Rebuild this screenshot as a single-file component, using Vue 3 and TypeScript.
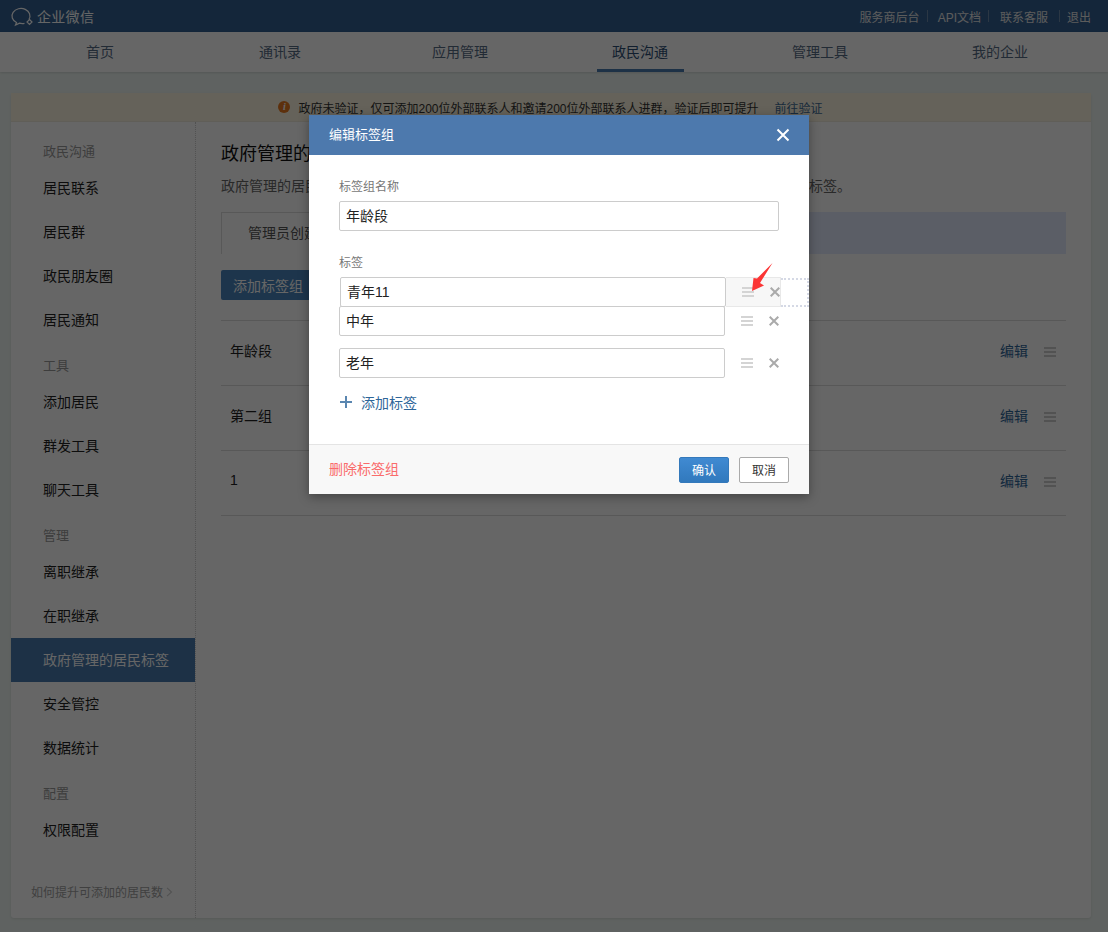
<script setup lang="ts">
interface SideGroup {
  title?: string
  items: string[]
}

const tabs = ['首页', '通讯录', '应用管理', '政民沟通', '管理工具', '我的企业']

const sideGroups: SideGroup[] = [
  { title: '政民沟通', items: ['居民联系', '居民群', '政民朋友圈', '居民通知'] },
  { title: '工具', items: ['添加居民', '群发工具', '聊天工具'] },
  { title: '管理', items: ['离职继承', '在职继承', '政府管理的居民标签', '安全管控', '数据统计'] },
  { title: '配置', items: ['权限配置'] }
]

const groups = ['年龄段', '第二组', '1']
const tags = ['中年', '老年']
</script>

<template>
  <div class="page">
    <header class="topbar">
      <div class="logo">
        <svg width="26" height="20" viewBox="0 0 26 20" fill="none">
          <path d="M18.900 12.500A9 7.500 0 1 0 6.500 15.500L5.500 18L9.500 16.200C11 16.600 13 16.700 14.500 16.300" stroke="#fff" stroke-width="1.200" />
          <path d="M19.500 12.500L22 15L19.500 17.500L17 15Z" stroke="#fff" stroke-width="1.200" />
        </svg>
        <span>企业微信</span>
      </div>
      <nav class="toplinks">
        <a>服务商后台</a><i class="first"></i><a>API文档</a><i></i><a>联系客服</a><i class="last"></i><a>退出</a>
      </nav>
    </header>

    <nav class="tabs">
      <a v-for="tab in tabs" :key="tab" class="tab" :class="{ active: tab === '政民沟通' }">
        <span>{{ tab }}</span>
      </a>
    </nav>

    <section class="card">
      <div class="notice">
        <span class="notice-icon">i</span>
        <span>政府未验证，仅可添加200位外部联系人和邀请200位外部联系人进群，验证后即可提升</span>
        <a class="notice-link">前往验证</a>
      </div>

      <div class="card-body">
        <aside class="sidebar">
          <div v-for="group in sideGroups" :key="group.title" class="side-group">
            <div class="side-title">{{ group.title }}</div>
            <a
              v-for="item in group.items"
              :key="item"
              class="side-item"
              :class="{ current: item === '政府管理的居民标签' }"
            >{{ item }}</a>
          </div>
          <a class="side-help">如何提升可添加的居民数<svg width="7" height="10" viewBox="0 0 7 10" fill="none"><path d="M1 .8L5.500 5 1 9.200" stroke="#ccc" stroke-width="1.100" /></svg></a>
        </aside>

        <main class="content">
          <h1>政府管理的居民标签</h1>
          <p>政府管理的居民标签可以由管理员统一创建和管理，成员可以在与居民沟通时为居民添加上这些标签。</p>
          <div class="sub-tabs">
            <div class="sub-tab">管理员创建的标签</div>
          </div>
          <button class="add-btn">添加标签组</button>
          <ul class="list">
            <li v-for="name in groups" :key="name">
              <span class="list-name">{{ name }}</span>
              <a class="list-edit">编辑</a>
              <svg class="list-drag" width="12" height="10" viewBox="0 0 12 10"><path d="M0 0h12v2H0zM0 4h12v2H0zM0 8h12v2H0z" /></svg>
            </li>
          </ul>
        </main>
      </div>
    </section>

    <div class="mask"></div>

    <div class="dialog">
      <div class="dialog-head">
        <span>编辑标签组</span>
        <svg width="14" height="14" viewBox="0 0 14 14"><path d="M1.500 1.500l11 11M12.500 1.500l-11 11" stroke="#fff" stroke-width="2" /></svg>
      </div>
      <div class="dialog-body">
        <label>标签组名称</label>
        <input class="name-input" value="年龄段" />
        <label class="tag-label">标签</label>

        <div class="tag-row dragging">
          <input value="青年11" />
          <div class="tag-tools">
            <svg class="drag" width="12" height="10" viewBox="0 0 12 10"><path d="M0 0h12v2H0zM0 4h12v2H0zM0 8h12v2H0z" /></svg>
            <svg class="del" width="10" height="10" viewBox="0 0 10 10"><path d="M.7.700l8.600 8.600M9.300.700L.7 9.300" stroke="#aaa" stroke-width="2" /></svg>
          </div>
          <div class="drop-slot"></div>
        </div>

        <div v-for="tag in tags" :key="tag" class="tag-row">
          <input :value="tag" />
          <div class="tag-tools">
            <svg class="drag" width="12" height="10" viewBox="0 0 12 10"><path d="M0 0h12v2H0zM0 4h12v2H0zM0 8h12v2H0z" /></svg>
            <svg class="del" width="10" height="10" viewBox="0 0 10 10"><path d="M.7.700l8.600 8.600M9.300.700L.7 9.300" stroke="#aaa" stroke-width="2" /></svg>
          </div>
        </div>

        <a class="add-tag">
          <svg width="12" height="12" viewBox="0 0 12 12"><path d="M6 0v12M0 6h12" stroke="#5a86b0" stroke-width="2" /></svg>
          <span>添加标签</span>
        </a>
      </div>
      <div class="dialog-foot">
        <a class="remove">删除标签组</a>
        <button class="btn primary">确认</button>
        <button class="btn">取消</button>
      </div>

      <svg class="pointer" width="24" height="30" viewBox="0 0 24 30">
        <path d="M22.500 1L7 16.500 3.500 16 2 29 14 23.500 10 21z" fill="#fb3535" />
      </svg>
    </div>
  </div>
</template>

<style scoped>
.page {
  position: relative;
  min-height: 932px;
  background: #eef6f2;
  font-family: "Liberation Sans", "Noto Sans CJK SC", sans-serif;
  font-size: 14px;
  color: #222;
  overflow: hidden;
  display: flex;
  flex-direction: column;
}

.topbar {
  height: 32px;
  background: #325f91;
  display: flex;
  align-items: center;
  justify-content: space-between;
  padding: 0 17px 0 10px;
}

.logo {
  display: flex;
  align-items: center;
  color: #fff;
  font-size: 14px;
  letter-spacing: 0.3px;
}

.logo svg {
  display: block;
  margin-top: 1px;
}

.logo span {
  margin-left: 1px;
}

.toplinks {
  display: flex;
  align-items: center;
  color: #e6e6e6;
  font-size: 12px;
}

.toplinks i {
  width: 1px;
  height: 12px;
  background: #6d8bab;
  margin: 0 11px 0 7px;
}

.toplinks i.first {
  margin: 0 10px 0 7px;
}

.toplinks i.last {
  margin: 0 7px 0 11px;
}

.tabs {
  height: 40px;
  padding: 0 18px 0 10px;
  background: #fff;
  display: grid;
  grid-template-columns: repeat(6, 1fr);
  box-shadow: 0 1px 2px rgba(0, 0, 0, 0.12);
}

.tab {
  display: flex;
  justify-content: center;
  color: #566b85;
}

.tab span {
  width: 87px;
  text-align: center;
  line-height: 40px;
  height: 40px;
  box-sizing: border-box;
}

.tab.active span {
  color: #2c4d74;
  border-bottom: 3px solid #4a7cb0;
}

.card {
  margin: 21px 17px 14px 11px;
  height: 825px;
  background: #fff;
  border-radius: 3px;
  box-shadow: 0 1px 3px rgba(0, 0, 0, 0.1);
  display: flex;
  flex-direction: column;
}

.notice {
  height: 29px;
  flex: none;
  background: #fdf6e0;
  border-bottom: 1px solid #f1ecdc;
  box-sizing: border-box;
  display: flex;
  align-items: center;
  justify-content: center;
  gap: 8px;
  font-size: 12px;
  color: #333;
  padding-right: 1px;
}

.notice-icon {
  width: 12px;
  height: 12px;
  border-radius: 50%;
  background: #e8791f;
  color: #fff;
  font: italic bold 10px/12px "Liberation Serif", serif;
  text-align: center;
}

.notice-link {
  margin-left: 8px;
  color: #3f6b96;
}

.card-body {
  flex: 1;
  display: flex;
  min-height: 0;
}

.sidebar {
  width: 184px;
  flex: none;
  border-right: 1px dotted #ccc;
  padding-top: 16px;
  display: flex;
  flex-direction: column;
}

.side-group + .side-group {
  margin-top: 10px;
}

.side-title {
  height: 28px;
  line-height: 28px;
  padding-left: 32px;
  font-size: 13px;
  color: #999;
}

.side-item {
  display: block;
  height: 44px;
  line-height: 44px;
  padding-left: 32px;
  color: #222;
}

.side-item.current {
  background: #4a7cb0;
  color: #fff;
}

.side-help {
  margin-top: auto;
  padding: 0 0 18px 20px;
  font-size: 12px;
  color: #a0a0a0;
  display: flex;
  align-items: center;
  gap: 3px;
}

.content {
  flex: 1;
  min-width: 0;
  padding: 21px 25px 0 25px;
}

.content h1 {
  margin: 0;
  font-size: 18px;
  font-weight: 400;
  line-height: 22px;
  color: #111;
}

.content p {
  margin: 11px 0 0;
  font-size: 14px;
  line-height: 20px;
  color: #666;
  white-space: nowrap;
}

.sub-tabs {
  margin-top: 16px;
  height: 42px;
  background: #e3ecff;
}

.sub-tab {
  width: 150px;
  height: 42px;
  box-sizing: border-box;
  background: #fff;
  border: 1px solid #ddd;
  border-right: 0;
  border-bottom: 0;
  line-height: 41px;
  padding-left: 26px;
  color: #555;
}

.add-btn {
  display: block;
  margin-top: 16px;
  height: 30px;
  padding: 0 12px;
  border: 0;
  border-radius: 2px;
  background: #4a85bd;
  color: #fff;
  font: inherit;
}

.list {
  list-style: none;
  margin: 20px 0 0;
  padding: 0;
  border-top: 1px solid #ddd;
}

.list li {
  height: 65px;
  box-sizing: border-box;
  border-bottom: 1px solid #ddd;
  display: flex;
  align-items: center;
  padding: 0 10px 0 9px;
}

.list-name,
.list-edit {
  margin-bottom: 6px;
}

.list-name {
  flex: 1;
}

.list-edit {
  color: #2f6699;
}

.list-drag {
  margin: 0 0 2px 16px;
  fill: #ccc;
}

.mask {
  position: absolute;
  inset: 0;
  background: rgba(0, 0, 0, 0.6);
}

.dialog {
  position: absolute;
  left: 309px;
  top: 115px;
  width: 500px;
  background: #fff;
  box-shadow: 0 3px 10px rgba(0, 0, 0, 0.35);
  overflow: hidden;
}

.dialog-head {
  height: 40px;
  background: #4d79ad;
  color: #fff;
  font-size: 13px;
  display: flex;
  align-items: center;
  justify-content: space-between;
  padding: 0 19px 0 20px;
}

.dialog-head span {
  margin-bottom: 3px;
}

.dialog-body {
  height: 289px;
  box-sizing: border-box;
  padding: 24px 30px 0;
}

.dialog-body label {
  display: block;
  height: 16px;
  line-height: 16px;
  font-size: 12px;
  color: #777;
}

.dialog-body input {
  box-sizing: border-box;
  height: 30px;
  border: 1px solid #ccc;
  border-radius: 2px;
  padding: 0 6px 2px;
  font: inherit;
  color: #222;
  background: #fff;
  outline: none;
}

.name-input {
  display: block;
  width: 440px;
  margin-top: 6px;
}

.dialog-body .tag-label {
  margin-top: 24px;
}

.tag-row {
  display: flex;
  align-items: center;
  margin-top: 12px;
}

.tag-row input {
  width: 386px;
  flex: none;
}

.tag-tools {
  width: 55px;
  height: 30px;
  flex: none;
  box-sizing: border-box;
  display: flex;
  align-items: center;
  padding-left: 16px;
}

.tag-tools .drag {
  fill: #d4d4d4;
}

.tag-tools .del {
  margin-left: 16px;
}

.tag-row.dragging {
  margin: 6px 0 -1px 1px;
  position: relative;
  z-index: 1;
}

.tag-row.dragging .tag-tools {
  background: #f7f7f7;
  border: 1px solid #e8e8e8;
  border-left: 0;
}

.tag-row.dragging + .tag-row {
  margin-top: 0;
}

.drop-slot {
  width: 28px;
  height: 29px;
  flex: none;
  box-sizing: border-box;
  border: 2px dotted #d5d9e5;
  border-left: 0;
}

.add-tag {
  display: flex;
  align-items: center;
  gap: 9px;
  margin: 15px 0 0 1px;
  color: #2f6699;
  height: 18px;
}

.dialog-foot {
  height: 50px;
  box-sizing: border-box;
  background: #f8f8f8;
  border-top: 1px solid #e4e4e4;
  display: flex;
  align-items: center;
  padding: 0 20px;
  gap: 10px;
}

.remove {
  margin: 0 auto 3px 0;
  color: #fa6b6b;
}

.btn {
  width: 50px;
  height: 26px;
  padding: 0;
  border: 1px solid #aaa;
  border-radius: 2px;
  background: #fff;
  color: #333;
  font: 12px "Liberation Sans", "Noto Sans CJK SC", sans-serif;
}

.btn.primary {
  border-color: #3479bb;
  color: #fff;
  background: linear-gradient(#408ad2, #3179bd);
}

.pointer {
  position: absolute;
  left: 441px;
  top: 147px;
  z-index: 2;
}
</style>

<style>
html,
body {
  margin: 0;
  background: #eef6f2;
}
</style>
